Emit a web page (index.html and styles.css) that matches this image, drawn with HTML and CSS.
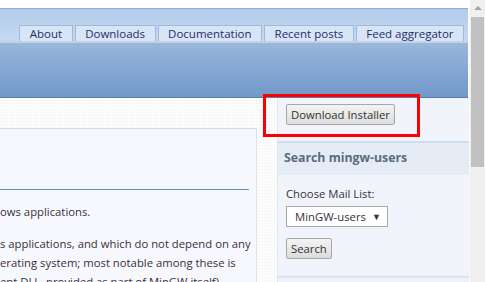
FILE: index.html
```html
<!DOCTYPE html>
<html lang="en">
<head>
    <meta charset="UTF-8">
    <meta name="viewport" content="width=device-width, initial-scale=1.0">
    <title>MinGW | Minimalist GNU for Windows</title>
    <link rel="stylesheet" href="styles.css">
</head>
<body>
    <div class="window">
        <div class="page">
            <div class="top-gap"></div>

            <div class="header">
                <div class="nav">
                    <a class="tab" href="#">About</a>
                    <a class="tab" href="#">Downloads</a>
                    <a class="tab" href="#">Documentation</a>
                    <a class="tab" href="#">Recent posts</a>
                    <a class="tab" href="#">Feed aggregator</a>
                </div>
                <div class="nav-strip"></div>
                <div class="banner"></div>
            </div>

            <div class="content">
                <div class="main">
                    <div class="main-top"></div>
                    <div class="main-body">
                        <div class="title-area"></div>
                        <p>ows applications.</p>
                        <p>s applications, and which do not depend on any<br>
                        erating system; most notable among these is<br>
                        ent DLL, provided as part of MinGW itself)</p>
                    </div>
                </div>

                <div class="sidebar">
                    <div class="block download-block">
                        <button class="btn">Download Installer</button>
                        <div class="highlight"></div>
                    </div>
                    <div class="block search-block">
                        <h2 class="block-title">Search mingw-users</h2>
                        <div class="block-body">
                            <label for="list">Choose Mail List:</label>
                            <div class="select" id="list">
                                <span>MinGW-users</span>
                                <span class="arrow">&#9660;</span>
                            </div>
                            <button class="btn">Search</button>
                        </div>
                    </div>
                    <div class="block next-block"></div>
                </div>
            </div>
        </div>

        <div class="scrollbar">
            <div class="scroll-up"></div>
            <div class="scroll-thumb"></div>
        </div>
    </div>
</body>
</html>
```

FILE: styles.css
```css
html, body {
    margin: 0;
    padding: 0;
    height: 100%;
    overflow: hidden;
}
body {
    font-family: "Open Sans", "Noto Sans", sans-serif;
    font-size: 11.3px;
    color: #3a2f3a;
    background: #fff;
}
.window {
    display: flex;
    height: 282px;
}
.page {
    width: 470px;
    flex: none;
    background-color: #fcfcfd;
    background-image: radial-gradient(#eef0f4 0.6px, transparent 0.7px);
    background-size: 3px 3px;
}
.top-gap {
    height: 8px;
    background: #fff;
}
.header {
    width: 468px;
}
.nav {
    height: 32px;
    border-top: 1px solid #8fadd6;
    background: linear-gradient(#b3cbeb, #c6d9f1);
    display: flex;
    justify-content: flex-end;
    align-items: flex-end;
    padding-right: 4px;
}
.tab {
    display: block;
    height: 15px;
    line-height: 16px;
    padding: 0 9.5px;
    margin-left: 2px;
    border: 1px solid #9fb9dc;
    border-bottom: none;
    background: #d8e5f6;
    color: #262d6a;
    text-decoration: none;
    font-size: 11.5px;
    white-space: nowrap;
}
.nav-strip {
    height: 2px;
    background: #c3d1e5;
}
.banner {
    height: 54px;
    background: linear-gradient(#9ab6db, #7199c9);
    border-bottom: 1px solid #5b7db0;
}
.content {
    display: flex;
    align-items: flex-start;
}
.main {
    width: 257px;
    flex: none;
}
.main-top {
    height: 30px;
}
.main-body {
    border-top: 1px solid #d5d8df;
    border-right: 1px solid #dde1e8;
    background: #f6f8fd;
    padding: 0 7px 0 0;
    height: 160px;
    overflow: hidden;
}
.title-area {
    height: 60px;
    border-bottom: 1px solid #5e92c4;
}
.main-body p {
    margin: 12px 0 0;
    line-height: 19px;
    white-space: nowrap;
}
.main-body p + p {
    margin-top: 13px;
}
.sidebar {
    width: 191px;
    margin-left: 20px;
    background: #f1f4fa;
    border-left: 1px solid #e1e6ee;
}
.download-block {
    position: relative;
    height: 45px;
    padding-left: 8px;
    border-bottom: 2px solid #d2ddec;
    box-sizing: border-box;
    padding-top: 6px;
}
.highlight {
    position: absolute;
    left: -15px;
    top: -4px;
    width: 151px;
    height: 37px;
    border: 3px solid #ff0000;
}
.btn {
    font-family: inherit;
    font-size: 11.3px;
    color: #333;
    height: 21px;
    padding: 0 4px;
    border: 1px solid #a8a8a8;
    border-radius: 2px;
    background: linear-gradient(#f4f4f4, #dcdcdc);
    line-height: 19px;
}
.block-title {
    margin: 0;
    height: 32px;
    line-height: 30px;
    padding-left: 6px;
    background: #e5ecf5;
    font-size: 12.3px;
    font-weight: bold;
    color: #5b6b80;
}
.block-body {
    padding: 11px 8px 0;
    height: 90px;
    border-bottom: 1px solid #d6e0ee;
}
.block-body label {
    display: block;
    line-height: 16px;
    margin-bottom: 4px;
}
.select {
    height: 19px;
    border: 1px solid #a9a9a9;
    background: #fff;
    display: flex;
    justify-content: space-between;
    align-items: center;
    padding: 0 6px 0 8px;
    width: 86px;
    margin-bottom: 11px;
}
.select .arrow {
    font-size: 9px;
    color: #333;
}
.next-block {
    height: 4px;
    border-top: 1px solid #e3e9f2;
    background: #eef2f8;
}
.scrollbar {
    width: 15px;
    background: #f0f0f0;
}
.scroll-up {
    width: 0;
    height: 0;
    margin: 6px auto 0;
    border-left: 4px solid transparent;
    border-right: 4px solid transparent;
    border-bottom: 4px solid #a3a3a3;
}
.scroll-thumb {
    margin: 7px 1px 0;
    height: 150px;
    background: #c1c1c1;
}
```
